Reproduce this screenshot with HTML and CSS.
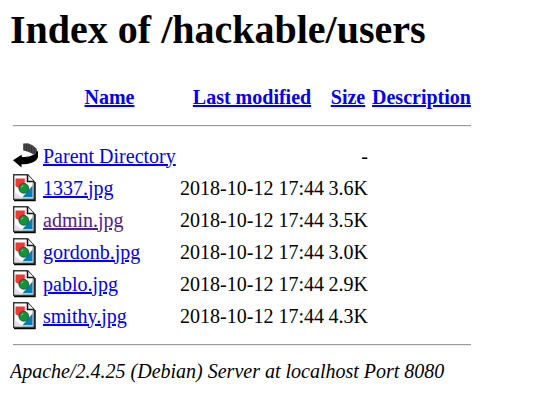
FILE: index.html
```html
<!DOCTYPE html>
<html lang="en">
<head>
<meta charset="utf-8">
<title>Index of /hackable/users</title>
<link rel="stylesheet" href="styles.css">
</head>
<body>
<svg width="0" height="0" class="defs" aria-hidden="true">
<symbol id="back" viewBox="0 0 25 28">
<path d="M10.3 1.5L15 1.2Q20 2.5 23.5 6.5L24.5 11L20 12.5Q17 10 10.3 8.5Z" fill="#484848"/>
<path d="M11 2V8M13.5 2V9M16 3V9M18.5 4V10M21 6V11" stroke="#2c2c2c" stroke-width=".7"/>
<path d="M25 9.5Q25.5 12 25 15Q23.5 19.5 18 21Q14 22.5 8.5 22.2V25.5L0 18.2L8.5 12.8L9 15Q16 15.5 20 13Q23.5 11.5 23.5 9Z" fill="#000"/>
</symbol>
<symbol id="image" viewBox="0 0 25 28">
<path d="M1 26.4H21.8V8" fill="none" stroke="#000" stroke-width="1.8"/>
<path d="M.7.7H14.7L21 7.5V25.2H.7Z" fill="#fff" stroke="#383838" stroke-width="1.4"/>
<path d="M1.5 18L10 24.5H1.5Z" fill="#dbe1e7"/>
<path d="M20 9V24.3H9" fill="none" stroke="#a8b0b8" stroke-width="1"/>
<path d="M14.5 1V7.5H21" fill="#fff" stroke="#111" stroke-width="1.6"/>
<path d="M2.5 4.5H11.8V13.5H4.5L2.5 12Z" fill="#f63434"/>
<path d="M19.5 11.5V23.3H9.5Z" fill="#087ab8"/>
<circle cx="10.8" cy="14.3" r="4.9" fill="#0b963a" stroke="#28482d" stroke-width=".9"/>
<path d="M8.2 13.1L10.2 11.7" stroke="#70bf82" stroke-width="1.1"/>
</symbol>
</svg>
<h1>Index of /hackable/users</h1>
<table>
<tr class="head"><th class="icon"></th><th class="name"><a href="#">Name</a></th><th class="date"><a href="#">Last modified</a></th><th class="size"><a href="#">Size</a></th><th class="desc"><a href="#">Description</a></th></tr>
<tr class="rule"><th colspan="5"><hr></th></tr>
<tr><td><svg class="ico"><use href="#back"/></svg></td><td><a href="#">Parent Directory</a></td><td></td><td class="num">-</td><td></td></tr>
<tr><td><svg class="ico"><use href="#image"/></svg></td><td><a href="#">1337.jpg</a></td><td class="num">2018-10-12 17:44</td><td class="num">3.6K</td><td></td></tr>
<tr><td><svg class="ico"><use href="#image"/></svg></td><td><a class="seen" href="#">admin.jpg</a></td><td class="num">2018-10-12 17:44</td><td class="num">3.5K</td><td></td></tr>
<tr><td><svg class="ico"><use href="#image"/></svg></td><td><a href="#">gordonb.jpg</a></td><td class="num">2018-10-12 17:44</td><td class="num">3.0K</td><td></td></tr>
<tr><td><svg class="ico"><use href="#image"/></svg></td><td><a href="#">pablo.jpg</a></td><td class="num">2018-10-12 17:44</td><td class="num">2.9K</td><td></td></tr>
<tr><td><svg class="ico"><use href="#image"/></svg></td><td><a href="#">smithy.jpg</a></td><td class="num">2018-10-12 17:44</td><td class="num">4.3K</td><td></td></tr>
<tr class="rule"><th colspan="5"><hr></th></tr>
</table>
<address>Apache/2.4.25 (Debian) Server at localhost Port 8080</address>
</body>
</html>
```
FILE: styles.css
```css
body { margin: 6px 10px 0; font: 20px/23px "Liberation Serif", serif; color: #000; background: #fff; overflow: hidden; }
.defs { display: block; }
h1 { margin: 0; font-size: 40px; line-height: 48px; }
table { margin-top: 26px; width: 464px; table-layout: fixed; border-collapse: separate; border-spacing: 2px; }
th, td { padding: 1px; white-space: nowrap; vertical-align: middle; }
tr { height: 30px; }
.icon { width: 26px; }
.name { width: 133px; }
.date { width: 144px; }
.size { width: 40px; }
.rule { height: 24px; }
.rule + tr td { padding-top: 2px; }
hr { margin: 0; border: solid; border-width: 1px 0; border-color: #9a9a9a transparent #eee; }
.num { text-align: right; }
a { color: #0000ee; }
.seen { color: #551a8b; }
.ico { display: block; width: 25px; height: 28px; }
address { margin-top: 1px; }
```
